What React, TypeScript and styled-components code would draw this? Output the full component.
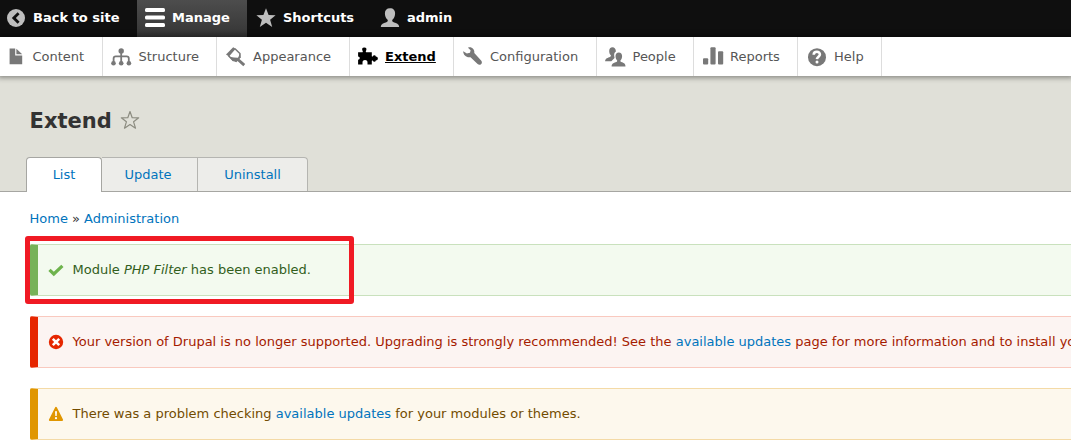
import React from 'react';
import styled, { createGlobalStyle, css } from 'styled-components';

const GlobalStyle = createGlobalStyle`
  * { box-sizing: border-box; }
  body {
    margin: 0;
    background: #fff;
    color: #333;
    font: 13px/20px "DejaVu Sans", sans-serif;
  }
`;

const Page = styled.div`
  width: 100%;
  height: 447px;
  overflow: hidden;
`;

const Toolbar = styled.nav`
  display: flex;
  height: 37px;
  background: #0f0f0f;
`;

const ToolbarTab = styled.a<{ $width: number; $iconLeft: number; $active?: boolean }>`
  display: flex;
  align-items: center;
  flex: none;
  gap: 7px;
  width: ${(p) => p.$width}px;
  padding: 0 0 2px ${(p) => p.$iconLeft}px;
  color: #fff;
  font-weight: bold;
  white-space: nowrap;
  ${(p) => p.$active && css`background: linear-gradient(#4d4d4d, #353535);`}
`;

const Tray = styled.nav`
  position: relative;
  display: flex;
  height: 39px;
  background: #fff;
  box-shadow: 0 0 5px 2px rgba(0, 0, 0, 0.38);
`;

const TrayItem = styled.a<{ $width: number; $gap?: number; $first?: boolean; $active?: boolean }>`
  display: flex;
  align-items: center;
  flex: none;
  gap: ${(p) => p.$gap ?? 7}px;
  width: ${(p) => p.$width}px;
  padding-left: ${(p) => (p.$first ? 6 : p.$active ? 8 : 9)}px;
  border-right: 1px solid #ddd;
  color: ${(p) => (p.$active ? '#000' : '#565656')};
  font-weight: ${(p) => (p.$active ? 'bold' : 'normal')};
  text-decoration: ${(p) => (p.$active ? 'underline' : 'none')};
  white-space: nowrap;
`;

const Icon = styled.svg<{ $color: string }>`
  display: block;
  flex: none;
  width: 20px;
  height: 20px;
  overflow: visible;
  fill: ${(p) => p.$color};
`;

const Header = styled.header`
  display: flex;
  flex-direction: column;
  justify-content: space-between;
  height: 116px;
  padding: 31px 0 0 26px;
  background: #e0e0d8;
  border-bottom: 1px solid #a6a6a2;
`;

const TitleRow = styled.div`
  display: flex;
  align-items: center;
  gap: 8px;
  height: 26px;
  padding-left: 4px;
`;

const Title = styled.h1`
  margin: 0 0 0 -0.4px;
  padding-top: 2px;
  font-size: 21px;
  line-height: 26px;
`;

const Tabs = styled.div`
  display: flex;
  height: 35px;
  margin-bottom: -1px;
`;

const Tab = styled.a<{ $width: number; $active?: boolean; $last?: boolean; $shift?: number }>`
  width: ${(p) => p.$width}px;
  height: ${(p) => (p.$active ? 35 : 34)}px;
  padding: 7px ${(p) => p.$shift ?? 0}px 0 0;
  border: 1px solid ${(p) => (p.$active ? '#a6a6a2' : '#b5b5b1')};
  border-bottom: 0;
  border-left-width: ${(p) => (p.$active ? 1 : 0)}px;
  border-radius: ${(p) => (p.$active ? '4px 4px 0 0' : p.$last ? '0 4px 0 0' : '0')};
  background: ${(p) => (p.$active ? '#fff' : '#ededea')};
  color: #0074bd;
  text-align: center;
`;

const Content = styled.main`
  position: relative;
  padding: 17px 0 0 30px;
`;

const Breadcrumb = styled.div`
  height: 35px;
  margin-left: -0.5px;
`;

const Link = styled.a`
  color: #0074bd;
`;

type Tone = 'status' | 'error' | 'warning';

const tones: Record<Tone, { accent: string; edge: string; fill: string; text: string }> = {
  status: { accent: '#77b259', edge: '#c9e1bd', fill: '#f3faef', text: '#325e1c' },
  error: { accent: '#e62600', edge: '#f9c9bf', fill: '#fcf4f2', text: '#a51b00' },
  warning: { accent: '#e09600', edge: '#f4daa6', fill: '#fdf8ed', text: '#734c00' },
};

const Message = styled.div<{ $tone: Tone }>`
  display: flex;
  align-items: center;
  gap: 8.5px;
  width: 1060px;
  height: 52px;
  margin-bottom: 20px;
  padding-left: 10px;
  border: 1px solid ${(p) => tones[p.$tone].edge};
  border-left: 8px solid ${(p) => tones[p.$tone].accent};
  border-radius: 2px;
  background: ${(p) => tones[p.$tone].fill};
  color: ${(p) => tones[p.$tone].text};
  white-space: nowrap;
`;

const MessageIcon = styled.svg`
  flex: none;
  width: 16px;
  height: 16px;
`;

const Highlight = styled.div`
  position: absolute;
  top: 44px;
  left: 25px;
  width: 329px;
  height: 68px;
  border: 5px solid #f01a24;
  border-radius: 3px;
`;

const GREY = '#787878';
const LIGHT = '#bebebe';

const BackIcon = () => (
  <Icon $color={LIGHT} viewBox="0 0 20 20">
    <circle cx="10" cy="10" r="9" />
    <path d="M12.600 5.200 7.800 10l4.800 4.800" fill="none" stroke="#0f0f0f" strokeWidth="2.800" />
  </Icon>
);

const MenuIcon = () => (
  <Icon $color="#fff" viewBox="0 0 20 20">
    <rect y="0" width="20" height="4" rx="1.5" />
    <rect y="7.5" width="20" height="4" rx="1.5" />
    <rect y="15" width="20" height="4" rx="1.5" />
  </Icon>
);

const StarIcon = () => (
  <Icon $color={LIGHT} viewBox="0 0 20 20">
    <path d="M10 .2 12.600 7.100l7 .1-5.500 4.500 2.100 7.300-6.200-4.200-6.200 4.200 2.100-7.300L.4 7.200l7-.1z" />
  </Icon>
);

const UserIcon = () => (
  <Icon $color={LIGHT} viewBox="0 0 20 20">
    <path d="M10 .2C6.600.2 4.900 2.300 4.900 5.300c0 2.700 1 5 2.500 6.300.7.9.6 1.900-.6 2.500C4.200 15.300 1.100 15.600.8 18.900h18.400c-.3-3.300-3.400-3.600-6-4.800-1.200-.6-1.300-1.600-.6-2.500 1.500-1.300 2.500-3.600 2.500-6.300C15.100 2.300 13.400.2 10 .2z" />
  </Icon>
);

const FileIcon = () => (
  <Icon $color={GREY} viewBox="0 0 20 20">
    <path d="M3.600 1.500h5.600v6.900h7V17.200H3.600z" />
    <path d="M10.400 1.700v5.500h5.800z" />
  </Icon>
);

const StructureIcon = () => (
  <Icon $color={GREY} viewBox="0.800 0 20 20">
    <path d="M10 5v10M2.400 15v-3.400q0-2.200 2.200-2.200h10.800q2.200 0 2.200 2.200V15" fill="none" stroke={GREY} strokeWidth="1.800" />
    <circle cx="10" cy="4" r="2.700" />
    <circle cx="2.300" cy="16.300" r="2.300" />
    <circle cx="10" cy="16.300" r="2.300" />
    <circle cx="17.700" cy="16.300" r="2.300" />
  </Icon>
);

const BrushIcon = () => (
  <Icon $color={GREY} viewBox="0 0 20 20">
    <path d="M7.200.2 9.700 1.700 3 9.500 0 7.500z" />
    <path d="M9 1.700 13.900 6.500v4.500M2.500 8.700l5.200 5.200" fill="none" stroke={GREY} strokeWidth="1.500" />
    <path d="M14.200 6.500 14.400 10.800 13.500 12 19.200 17 17.300 19.200 11.500 14 10.300 15.200 6.500 13.800 3.300 9.700 8 10.500l4 .3z" />
  </Icon>
);

const PuzzleIcon = () => (
  <Icon $color="#000" viewBox="0 0 20 20">
    <path d="M.1 5.200h4.300q.6 0 .4-.8Q2.900.6 6.300.4q3.400.2 1.500 4-.2.8.4.8h5.600v3.700q0 .9 1 .6.300-1.300 1.600-1.300 1.200 0 1.400 1.300 2.100.2 2.100 2t-2.100 2q-.2 1.300-1.400 1.300-1.300 0-1.600-1.300-1-.3-1 .6v3.300H9.500v-1.800Q9.600 13.100 7 12.900q-2.600.2-2.500 2.700v1.800H.1v-4.600q1.700-.2 1.700-1.700T.1 9.400z" />
  </Icon>
);

const WrenchIcon = () => (
  <Icon $color={GREY} viewBox="0 0 20 20">
    <path d="M5 .7C8.400-.7 11.900 2.400 11.300 6.100l6.800 7.300c2.300 2.500-.9 5.800-3.500 3.600L7.500 10.200C3.800 11.100.1 8.100.2 4.300L3.900 6.500 7 5.800 7.600 3.300z" />
  </Icon>
);

const PeopleIcon = () => (
  <Icon $color={GREY} viewBox="0.400 0 20 20">
    <path d="M6.900.2C4.800.2 3.600 1.700 3.600 3.900c0 1.900.6 3.200 1.500 4.200.5.700.1 1.400-.7 1.800C2.400 10.800-.400 11-.500 14.300h6.200l3.300-3.400C8.100 7.500 8.500 5.500 10.300 4.600 10.300 2 9 .2 6.900.2z" />
    <path d="M13.200 5.400c-2.100 0-3.300 1.500-3.300 3.700 0 1.900.6 3.200 1.500 4.200.5.700.1 1.400-.7 1.800-2 .9-4.600 1.100-4.700 4.400h13.900c-.1-3.300-2.200-3.500-4.200-4.400-.8-.4-1.200-1.100-.7-1.800.9-1 1.500-2.300 1.500-4.200 0-2.200-1.200-3.700-3.300-3.700z" />
  </Icon>
);

const ChartIcon = () => (
  <Icon $color={GREY} viewBox="0 0 20 20">
    <rect x="0" y="11.300" width="5.200" height="6.300" rx="1" />
    <rect x="7.400" y=".3" width="5.200" height="17.300" rx="1" />
    <rect x="15" y="4.300" width="5.200" height="13.300" rx="1" />
  </Icon>
);

const HelpIcon = () => (
  <Icon $color={GREY} viewBox="0 0 20 20">
    <circle cx="10" cy="10.200" r="9" />
    <path d="M6.700 7.700C6.800 3.700 13.100 3.900 12.900 7.600c0 2-2.800 2.300-3 4.600" fill="none" stroke="#fff" strokeWidth="2.600" />
    <circle cx="10" cy="15" r="1.500" fill="#fff" />
  </Icon>
);

const FavoriteIcon = () => (
  <Icon $color="none" viewBox="0 0 20 20">
    <path d="M10 1.500 12.200 7.700l6.500.1-5.100 4 1.900 6.400L10 14.600 4.500 18.200l1.900-6.400-5.100-4 6.500-.1z" stroke="#8c8c80" strokeWidth="1.200" strokeLinejoin="round" />
  </Icon>
);

const CheckIcon = () => (
  <MessageIcon viewBox="0 0 16 16">
    <path d="M1.500 7.800 5.800 12 14.400 3.800" fill="none" stroke="#6eb34d" strokeWidth="3.200" />
  </MessageIcon>
);

const ErrorIcon = () => (
  <MessageIcon viewBox="0 0 16 16">
    <circle cx="8" cy="8" r="7.200" fill="#e62600" />
    <path d="m4.800 4.800 6.400 6.400m0-6.400-6.400 6.400" stroke="#fff" strokeWidth="2.500" />
  </MessageIcon>
);

const WarningIcon = () => (
  <MessageIcon viewBox="0 0 16 16">
    <path d="M8 1.700 14.200 14H1.800z" fill="#e09600" stroke="#e09600" strokeWidth="1.800" strokeLinejoin="round" />
    <path d="M7 5.200h2L8.700 10H7.300z" fill="#fff" />
    <circle cx="8" cy="12.200" r="1.100" fill="#fff" />
  </MessageIcon>
);

const trayItems = [
  { label: 'Content', width: 103, gap: 6.5, icon: <FileIcon /> },
  { label: 'Structure', width: 114, gap: 6.5, icon: <StructureIcon /> },
  { label: 'Appearance', width: 133, icon: <BrushIcon /> },
  { label: 'Extend', width: 104, icon: <PuzzleIcon />, active: true },
  { label: 'Configuration', width: 143, icon: <WrenchIcon /> },
  { label: 'People', width: 97, gap: 6.5, icon: <PeopleIcon /> },
  { label: 'Reports', width: 104, icon: <ChartIcon /> },
  { label: 'Help', width: 84, icon: <HelpIcon /> },
];

export default function App() {
  return (
    <Page>
      <GlobalStyle />
      <Toolbar>
        <ToolbarTab $width={137} $iconLeft={6}><BackIcon />Back to site</ToolbarTab>
        <ToolbarTab $width={110} $iconLeft={8} $active><MenuIcon />Manage</ToolbarTab>
        <ToolbarTab $width={124} $iconLeft={9}><StarIcon />Shortcuts</ToolbarTab>
        <ToolbarTab $width={100} $iconLeft={9}><UserIcon />admin</ToolbarTab>
      </Toolbar>
      <Tray>
        {trayItems.map((item, index) => (
          <TrayItem
            key={item.label}
            $width={item.width}
            $gap={item.gap}
            $first={index === 0}
            $active={item.active}
          >
            {item.icon}
            {item.label}
          </TrayItem>
        ))}
      </Tray>
      <Header>
        <TitleRow>
          <Title>Extend</Title>
          <FavoriteIcon />
        </TitleRow>
        <Tabs>
          <Tab $width={76} $active>List</Tab>
          <Tab $width={96} $shift={3}>Update</Tab>
          <Tab $width={110} $last>Uninstall</Tab>
        </Tabs>
      </Header>
      <Content>
        <Breadcrumb>
          <Link>Home</Link> » <Link>Administration</Link>
        </Breadcrumb>
        <Message $tone="status">
          <CheckIcon />
          <span>Module <em>PHP Filter</em> has been enabled.</span>
        </Message>
        <Message $tone="error">
          <ErrorIcon />
          <span>
            Your version of Drupal is no longer supported. Upgrading is strongly recommended! See the{' '}
            <Link>available updates</Link> page for more information and to install your missing updates.
          </span>
        </Message>
        <Message $tone="warning">
          <WarningIcon />
          <span>
            There was a problem checking <Link>available updates</Link> for your modules or themes.
          </span>
        </Message>
        <Highlight />
      </Content>
    </Page>
  );
}
